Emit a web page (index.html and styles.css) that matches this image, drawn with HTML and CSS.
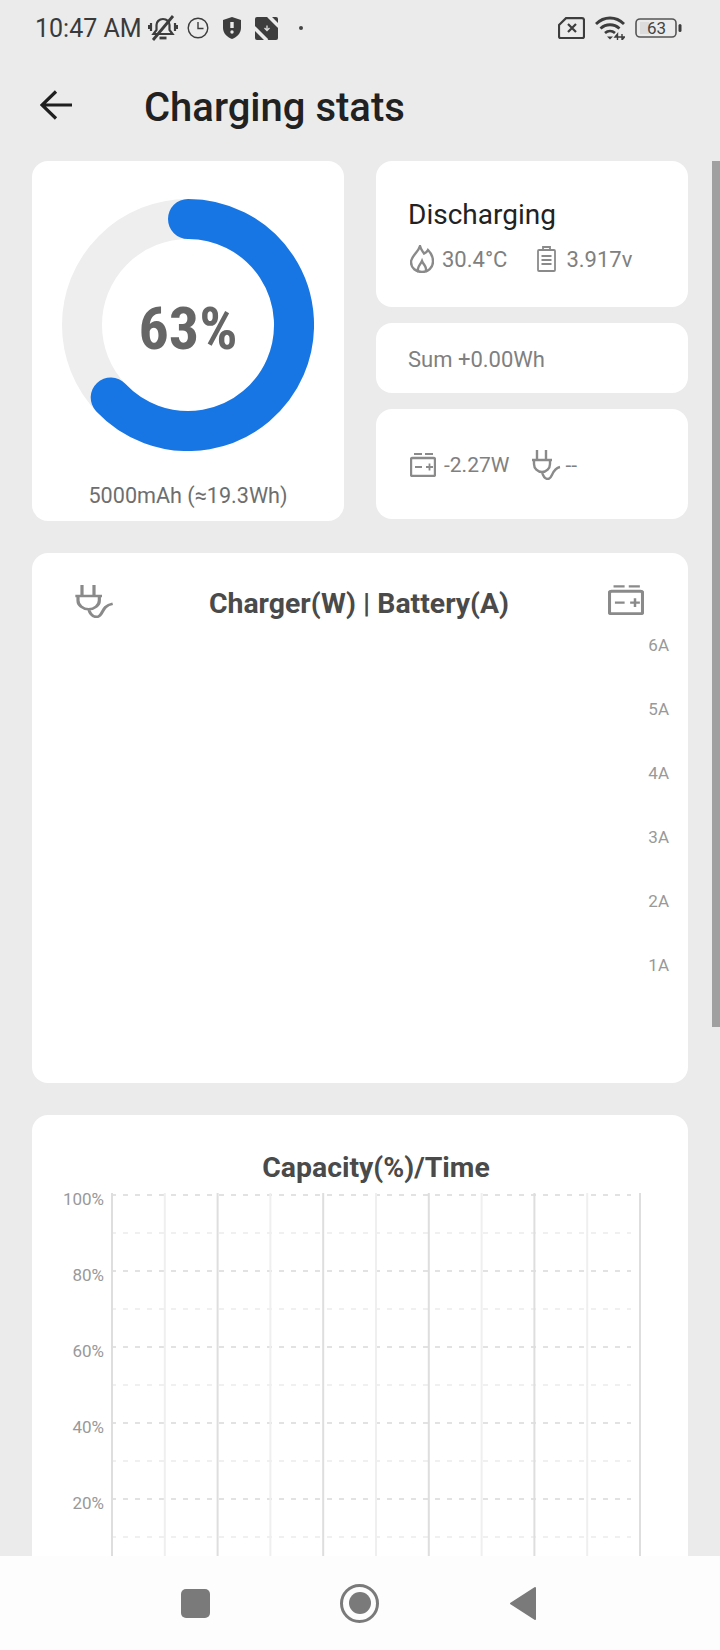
FILE: index.html
```html
<!DOCTYPE html>
<html lang="en">
<head>
<meta charset="utf-8">
<title>Charging stats</title>
<link rel="stylesheet" href="styles.css">
</head>
<body>
<div class="screen">
  <div class="status">
    <span class="time">10:47 AM</span>
    <svg class="si si-bell" viewBox="0 0 30 26"><path d="M15 4c-4 0-6.500 3-6.500 6v5l-3 4h19l-3-4v-5c0-3-2.500-6-6.500-6z" class="line-dark"/><path d="M11.500 23h7" class="line-wide"/><path d="M3 8v8M0.800 10v4M27 8v8M29.200 10v4" class="line-dark"/><path d="M5 25L25 1" class="line-wide"/></svg>
    <svg class="si si-clock" viewBox="0 0 22 22"><circle cx="11" cy="11" r="9.800" class="line-thin"/><path d="M11 5v6.500h5.500" class="line-thin"/></svg>
    <svg class="si si-shield" viewBox="0 0 18 22"><path d="M9 0l9 3v8c0 5-4 9-9 11-5-2-9-6-9-11V3z" class="fill-dark"/><path d="M9 5v6" class="line-white"/><circle cx="9" cy="15" r="1.700" class="fill-white"/></svg>
    <svg class="si si-dl" viewBox="0 0 23 23"><rect width="23" height="23" rx="2" class="fill-dark"/><path d="M-1 10.500L12 23.500M13.500-1L24 9.500" class="line-white-wide"/><path d="M12 8.500v4.500M9.500 11l2.500 2.500 2.500-2.500" class="line-arrow"/></svg>
    <span class="dot"></span>
    <span class="spacer"></span>
    <svg class="si si-sim" viewBox="0 0 27 22"><path d="M8 1.200h16a2 2 0 0 1 2 2v16a2 2 0 0 1-2 2H3a2 2 0 0 1-2-2V8z" class="line-dark"/><path d="M10 7l8 8M18 7l-8 8" class="line-dark"/></svg>
    <svg class="si si-wifi" viewBox="0 0 30 24"><path d="M1 8c8-8 20-8 28 0M5.500 12.500c5.500-5 13.500-5 19 0M10 17c3-2.500 7-2.500 10 0" class="line-wide"/><path d="M12 20.500h6L15 23.500z" class="fill-dark"/><path d="M22.500 24v-6l-2.500 3h5M27 18v6l2.500-3h-5" class="line-xs"/></svg>
    <svg class="si si-batt" viewBox="0 0 47 20"><rect x="1" y="1" width="40" height="18" rx="4" class="line-thin2"/><rect x="5" y="4" width="9" height="12" class="fill-soft"/><rect x="43.500" y="6" width="3" height="8" rx="1.500" class="fill-dark"/><text x="12" y="16" class="batt-num">63</text></svg>
  </div>

  <header class="topbar">
    <svg class="back" viewBox="0 0 32 30"><path d="M32 15H3M16 1.500L2 15l14 13.500"/></svg>
    <h1 class="title">Charging stats</h1>
  </header>

  <main class="content">
    <section class="top-grid">
      <div class="card gauge-card">
        <div class="gauge">
          <svg class="gauge-svg" viewBox="0 0 252 252">
            <circle cx="126" cy="126" r="106" class="gauge-track"/>
            <path d="M126 20A106 106 0 1 1 48.700 198.500" class="gauge-value"/>
          </svg>
          <span class="gauge-text">63%</span>
        </div>
        <div class="capacity">5000mAh (≈19.3Wh)</div>
      </div>
      <div class="side">
        <div class="card state-card">
          <div class="state">Discharging</div>
          <div class="metrics">
            <svg class="ic ic-flame" viewBox="0 0 24 28"><path d="M10 1c1 4 2.500 5 4 7.500 1.500-.5 3-1.500 4-3.500 3 3 5 7 5 11.500C23 23 18 27 12 27S1 23 1 17c0-3 2-5.500 4-8 1.500-2 4-4.500 5-8z" class="ic-line"/><path d="M8.500 27c-2.500-4 1.500-6.500 3.500-11 1.500 4 6 6.500 3.500 11" class="ic-line"/></svg>
            <span class="metric">30.4°C</span>
            <svg class="ic ic-doc" viewBox="0 0 19 26"><rect x="1" y="4" width="17" height="21" rx="1" class="ic-line-thin"/><path d="M6 4V1h7v3M4.500 10h10M4.500 14h10M4.500 18h10" class="ic-line-thin"/></svg>
            <span class="metric metric-v">3.917v</span>
          </div>
        </div>
        <div class="card sum-card">Sum +0.00Wh</div>
        <div class="card power-card">
          <svg class="ic ic-batt" viewBox="0 0 26 24"><path d="M4 1h8M15 1h8" class="ic-line-thin"/><rect x="1" y="5" width="24" height="18" rx="1.500" class="ic-line"/><path d="M5 14h7M16 14h7M19.500 10.500v7" class="ic-line-thin"/></svg>
          <span class="metric watt">-2.27W</span>
          <svg class="ic ic-plug" viewBox="0 0 30 30"><path d="M6 0v10M15 0v10M1 10h20M3 10v4a8 8 0 0 0 16 0v-4M11 22c1 4 3 7 6 7 5 0 3-10 12-12" class="ic-line"/></svg>
          <span class="metric metric-dash">--</span>
        </div>
      </div>
    </section>

    <section class="card amp-card">
      <div class="amp-head">
        <svg class="ic-lg ic-lg-plug" viewBox="0 0 30 30" preserveAspectRatio="none"><path d="M6 0v10M15 0v10M1 10h20M3 10v4a8 8 0 0 0 16 0v-4M11 22c1 4 3 7 6 7 5 0 3-10 12-12" class="ic-line"/></svg>
        <h2 class="chart-title">Charger(W) | Battery(A)</h2>
        <svg class="ic-lg ic-lg-batt" viewBox="0 0 26 24" preserveAspectRatio="none"><path d="M4 1h8M15 1h8" class="ic-line-thin"/><rect x="1" y="5" width="24" height="18" rx="1.500" class="ic-line"/><path d="M5 14h7M16 14h7M19.500 10.500v7" class="ic-line-thin"/></svg>
      </div>
      <ul class="amps">
        <li>6A</li><li>5A</li><li>4A</li><li>3A</li><li>2A</li><li>1A</li>
      </ul>
    </section>

    <section class="card cap-card">
      <h2 class="chart-title cap-title">Capacity(%)/Time</h2>
      <div class="cap-chart">
        <ul class="pct">
          <li>100%</li><li>80%</li><li>60%</li><li>40%</li><li>20%</li>
        </ul>
        <svg class="grid" width="532" height="400" viewBox="0 0 532 400">
          <path class="g-h" d="M0 2H520M0 78H520M0 154H520M0 230H520M0 306H520"/>
          <path class="g-h2" d="M0 40H520M0 116H520M0 192H520M0 268H520M0 344H520"/>
          <path class="g-v" d="M1 0V400M106.600 0V400M212.200 0V400M317.800 0V400M423.400 0V400M529 0V400"/>
          <path class="g-v2" d="M53.800 0V400M159.400 0V400M265 0V400M370.600 0V400M476.200 0V400"/>
        </svg>
      </div>
    </section>
  </main>

  <nav class="navbar">
    <span class="nav-square"></span>
    <span class="nav-circle"><span class="nav-inner"></span></span>
    <svg class="nav-back" viewBox="0 0 28 35"><path d="M26 2L2 17.500 26 33z"/></svg>
  </nav>

  <div class="scrollbar"></div>
</div>
</body>
</html>
```
FILE: styles.css
```css
* { box-sizing: border-box; }
html, body { margin: 0; padding: 0; }
body { font-family: Roboto, "Noto Sans", sans-serif; background: #ebebeb; }
ul { list-style: none; margin: 0; padding: 0; }
h1, h2 { margin: 0; }

.screen {
  position: relative;
  width: 720px;
  height: 1650px;
  display: flex;
  flex-direction: column;
  overflow: hidden;
  background: #ebebeb;
}

/* status bar */
.status {
  height: 54px;
  flex: none;
  display: flex;
  align-items: center;
  padding: 2px 0 0 35px;
  color: #333;
}
.time { font-size: 25px; width: 113px; white-space: nowrap; color: #3a3a3a; }
.si { flex: none; display: block; }
.si-bell { width: 30px; height: 26px; }
.si-clock { width: 22px; height: 22px; margin-left: 9px; }
.si-shield { width: 18px; height: 22px; margin-left: 14px; }
.si-dl { width: 23px; height: 23px; margin-left: 14px; }
.dot { width: 4px; height: 4px; border-radius: 50%; background: #444; margin-left: 21px; }
.spacer { flex: 1; }
.si-sim { width: 27px; height: 22px; }
.si-wifi { width: 30px; height: 24px; margin-left: 10px; }
.si-batt { width: 47px; height: 20px; margin-left: 10px; margin-right: 38px; }

.line-dark { fill: none; stroke: #3d3d3d; stroke-width: 2.2; }
.line-thin { fill: none; stroke: #3d3d3d; stroke-width: 1.4; }
.line-thin2 { fill: none; stroke: #555; stroke-width: 1.6; }
.line-wide { fill: none; stroke: #3d3d3d; stroke-width: 2.8; }
.line-xs { fill: none; stroke: #3d3d3d; stroke-width: 1.4; }
.line-white { fill: none; stroke: #ebebeb; stroke-width: 3.4; }
.line-white-wide { fill: none; stroke: #ebebeb; stroke-width: 3.6; }
.line-arrow { fill: none; stroke: #d8d8d8; stroke-width: 1.4; }
.fill-dark { fill: #3d3d3d; }
.fill-white { fill: #ebebeb; }
.fill-soft { fill: #dcdcdc; }
.batt-num { font-family: Roboto, sans-serif; font-size: 17px; fill: #444; }

/* header */
.topbar {
  height: 107px;
  flex: none;
  display: flex;
  align-items: center;
  padding-left: 40px;
  padding-bottom: 1px;
}
.back { width: 32px; height: 30px; fill: none; stroke: #1f1f1f; stroke-width: 3.2; flex: none; margin-top: -4px; }
.title { font-size: 40px; font-weight: 500; color: #212121; margin-left: 72px; white-space: nowrap; }

/* content */
.content {
  flex: 1;
  min-height: 0;
  overflow: hidden;
  padding: 0 32px;
  display: flex;
  flex-direction: column;
}
.card { background: #fff; border-radius: 16px; flex: none; }
.top-grid {
  display: grid;
  grid-template-columns: 312px 312px;
  column-gap: 32px;
  flex: none;
}
.gauge-card {
  height: 360px;
  display: flex;
  flex-direction: column;
  align-items: center;
  padding-top: 38px;
}
.gauge { position: relative; width: 252px; height: 252px; flex: none; }
.gauge-svg { display: block; width: 252px; height: 252px; }
.gauge-track { fill: none; stroke: #eeeeee; stroke-width: 40; }
.gauge-value { fill: none; stroke: #1776e4; stroke-width: 40; stroke-linecap: round; }
.gauge-text {
  position: absolute;
  inset: 0;
  padding-top: 6px;
  display: flex;
  align-items: center;
  justify-content: center;
  font-size: 60px;
  font-weight: 700;
  color: #666;
  font-stretch: 75%;
}
.capacity { font-size: 21.600px; color: #6e6e6e; margin-top: 32px; white-space: nowrap; }

.side { display: flex; flex-direction: column; gap: 16px; }
.state-card { height: 146px; padding: 37px 0 0 32px; }
.state { font-size: 28px; color: #222; line-height: 34px; }
.metrics { display: flex; align-items: center; margin-top: 12px; height: 30px; }
.ic { flex: none; display: block; }
.ic-flame { width: 24px; height: 28px; margin-left: 2px; }
.ic-doc { width: 19px; height: 26px; margin-left: 30px; }
.ic-batt { width: 26px; height: 24px; margin-left: 2px; }
.ic-plug { width: 30px; height: 30px; margin-left: 22px; }
.ic-line { fill: none; stroke: #8a8a8a; stroke-width: 2.4; }
.ic-line-thin { fill: none; stroke: #8a8a8a; stroke-width: 1.8; }
.metric { font-size: 22px; color: #808080; margin-left: 8px; white-space: nowrap; }
.metric-v { margin-left: 10px; }
.watt { font-size: 21px; }
.metric-dash { font-size: 21px; margin-left: 4px; }
.sum-card { height: 70px; padding: 2px 0 0 32px; display: flex; align-items: center; font-size: 22px; color: #808080; }
.power-card { height: 110px; padding: 2px 0 0 32px; display: flex; align-items: center; }

.amp-card {
  margin-top: 32px;
  height: 530px;
  padding-top: 32px;
}
.amp-head {
  display: grid;
  grid-template-columns: 1fr auto 1fr;
  align-items: start;
  height: 46px;
  padding: 0 44px 0 42px;
}
.ic-lg { display: block; }
.ic-lg-plug { width: 40px; height: 33px; }
.ic-lg-batt { width: 36px; height: 30px; justify-self: end; }
.chart-title { font-size: 28.400px; font-weight: 700; color: #4a4a4a; white-space: nowrap; }
.amp-head .chart-title { margin-top: 2px; line-height: 34px; }
.amps { display: flex; flex-direction: column; gap: 44px; align-items: flex-end; margin-top: 4px; padding-right: 19px; }
.amps li { font-size: 17px; line-height: 20px; color: #999; }

.cap-card { margin-top: 32px; height: 620px; }
.cap-title { text-align: center; padding: 36px 0 0 32px; line-height: 34px; }
.cap-chart { display: flex; margin-top: 2px; }
.pct { width: 72px; flex: none; display: flex; flex-direction: column; align-items: flex-end; gap: 56px; padding-top: 2px; }
.pct li { font-size: 17px; line-height: 20px; color: #999; }
.grid { flex: none; margin-left: 7px; margin-top: 6px; display: block; }
.g-h { fill: none; stroke: #e2e2e2; stroke-width: 2; stroke-dasharray: 5 7; }
.g-h2 { fill: none; stroke: #f0f0f0; stroke-width: 2; stroke-dasharray: 5 7; }
.g-v { fill: none; stroke: #dedede; stroke-width: 2; }
.g-v2 { fill: none; stroke: #efefef; stroke-width: 2; }

/* nav */
.navbar {
  height: 94px;
  flex: none;
  background: #fdfdfd;
  display: grid;
  grid-template-columns: 181px 29px 130px 40px 129px 28px;
  align-items: center;
}
.nav-square { grid-column: 2; width: 29px; height: 29px; border-radius: 5px; background: #7a7a7a; }
.nav-circle {
  grid-column: 4;
  width: 39px;
  height: 39px;
  border-radius: 50%;
  border: 3px solid #7a7a7a;
  display: flex;
  align-items: center;
  justify-content: center;
}
.nav-inner { width: 22px; height: 22px; border-radius: 50%; background: #7a7a7a; }
.nav-back { grid-column: 6; width: 28px; height: 35px; fill: #7a7a7a; stroke: #7a7a7a; stroke-width: 2; stroke-linejoin: round; }

.scrollbar {
  position: absolute;
  right: 0;
  top: 161px;
  width: 8px;
  height: 866px;
  background: #a0a0a0;
}
```
